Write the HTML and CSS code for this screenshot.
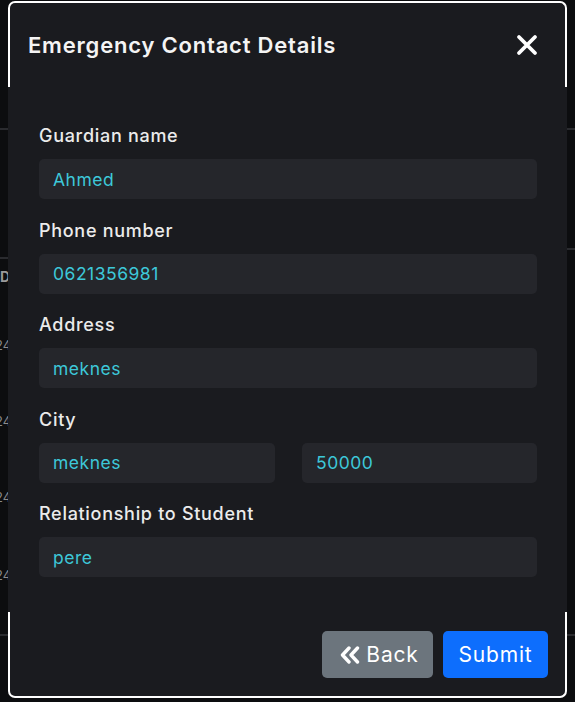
FILE: index.html
```html
<!DOCTYPE html>
<html lang="en">
<head>
<meta charset="utf-8">
<title>Emergency Contact Details</title>
<link rel="stylesheet" href="styles.css">
</head>
<body>
<div class="bg">
  <div class="strip strip-left">
    <div class="bg-line line-top"></div>
    <div class="bg-line line-head"></div>
    <div class="bg-head">D</div>
    <div class="bg-cell cell-first">24</div>
    <div class="bg-cell">24</div>
    <div class="bg-cell">24</div>
    <div class="bg-cell cell-last">24</div>
    <div class="bg-line line-bottom"></div>
  </div>
  <div class="strip strip-right">
    <div class="bg-line line-top"></div>
    <div class="bg-line line-head-r"></div>
    <div class="bg-line line-bottom-r"></div>
  </div>
</div>

<div class="modal">
  <div class="modal-header">
    <h5 class="modal-title">Emergency Contact Details</h5>
    <button class="btn-close" type="button" aria-label="Close">
      <svg width="22" height="22" viewBox="0 0 22 22"><path d="M3 3 L19 19 M19 3 L3 19" stroke="#fff" stroke-width="3.8" stroke-linecap="round" fill="none"/></svg>
    </button>
  </div>
  <div class="modal-body">
    <div class="field">
      <label class="label">Guardian name</label>
      <div class="input">Ahmed</div>
    </div>
    <div class="field">
      <label class="label">Phone number</label>
      <div class="input">0621356981</div>
    </div>
    <div class="field">
      <label class="label">Address</label>
      <div class="input">meknes</div>
    </div>
    <div class="field">
      <label class="label">City</label>
      <div class="row">
        <div class="input">meknes</div>
        <div class="input">50000</div>
      </div>
    </div>
    <div class="field">
      <label class="label">Relationship to Student</label>
      <div class="input">pere</div>
    </div>
  </div>
  <div class="modal-footer">
    <button class="btn btn-back" type="button">
      <svg class="icon-back" width="20" height="18" viewBox="0 0 20 18"><path d="M9 2 L2.5 9 L9 16 M17.5 2 L11 9 L17.5 16" stroke="#fff" stroke-width="3.4" stroke-linecap="round" stroke-linejoin="round" fill="none"/></svg>
      <span>Back</span>
    </button>
    <button class="btn btn-submit" type="button">Submit</button>
  </div>
</div>
</body>
</html>
```

FILE: styles.css
```css
* { box-sizing: border-box; }

html, body {
  margin: 0;
  padding: 0;
}

body {
  width: 575px;
  height: 702px;
  overflow: hidden;
  background: #0c0d0f;
  font-family: "Inter", "Open Sans", sans-serif;
  position: relative;
}

/* background page behind the modal */
.bg {
  display: flex;
  justify-content: space-between;
  height: 702px;
}

.strip {
  width: 8px;
  overflow: hidden;
  display: flex;
  flex-direction: column;
}

.bg-line {
  height: 2px;
  background: #2a2b2f;
  flex: none;
}

.line-top { margin-top: 128px; }

.line-head { margin-top: 127px; }

.bg-head {
  margin-top: 8px;
  height: 20px;
  font-size: 14px;
  line-height: 20px;
  font-weight: 700;
  color: #9a9a9a;
  white-space: nowrap;
}

.bg-cell {
  white-space: nowrap;
  font-size: 13px;
  line-height: 20px;
  height: 20px;
  color: #8a8a8a;
  margin-left: -5px;
  margin-top: 56px;
}

.cell-first { margin-top: 48px; }
.cell-last { margin-top: 58px; }

.line-bottom { margin-top: 49px; }

.line-head-r { margin-top: 118px; }
.line-bottom-r { margin-top: 384px; }

/* modal overlay */
.modal {
  position: absolute;
  left: 8px;
  top: 1px;
  width: 559px;
  display: flex;
  flex-direction: column;
  color: #ebebeb;
}

.modal-header {
  height: 86px;
  background: #1a1b1f;
  border: 2px solid #ffffff;
  border-bottom: 0;
  border-radius: 7px 7px 0 0;
  display: flex;
  align-items: center;
  justify-content: space-between;
  padding: 0 27px 0 18px;
}

.modal-title {
  margin: 0;
  font-size: 22px;
  font-weight: 600;
  letter-spacing: 0.8px;
  color: #f4f4f4;
  line-height: 26px;
}

.btn-close {
  background: none;
  border: 0;
  padding: 0;
  width: 22px;
  height: 22px;
  display: flex;
  cursor: pointer;
}

.modal-body {
  background: #1a1b1f;
  padding: 37px 30px 35px 31px;
  display: flex;
  flex-direction: column;
  gap: 19.5px;
}

.field {
  display: flex;
  flex-direction: column;
  gap: 11px;
}

.label {
  font-size: 18px;
  line-height: 24px;
  font-weight: 500;
  letter-spacing: 0.7px;
  color: #ebebeb;
}

.input {
  height: 40px;
  background: #25262b;
  border-radius: 5px;
  padding: 0 14px;
  display: flex;
  align-items: center;
  font-size: 17.5px;
  letter-spacing: 0.5px;
  color: #3dc8d9;
}

.row {
  display: grid;
  grid-template-columns: 236px 235px;
  column-gap: 27px;
}

.modal-footer {
  height: 86px;
  background: #1a1b1f;
  border: 2px solid #ffffff;
  border-top: 0;
  border-radius: 0 0 7px 7px;
  display: flex;
  justify-content: flex-end;
  align-items: flex-start;
  gap: 10px;
  padding: 19px 17px 0 0;
}

.btn {
  height: 47px;
  border: 0;
  border-radius: 5px;
  font-family: "Inter", "Open Sans", sans-serif;
  font-size: 21px;
  font-weight: 400;
  letter-spacing: 0.8px;
  color: #ffffff;
  display: flex;
  align-items: center;
  justify-content: center;
  cursor: pointer;
}

.btn-back {
  width: 111px;
  background: #6c757d;
  gap: 6px;
  padding-left: 10px;
}

.icon-back { flex: none; }

.btn-submit {
  width: 105px;
  background: #0d6efd;
}
```
